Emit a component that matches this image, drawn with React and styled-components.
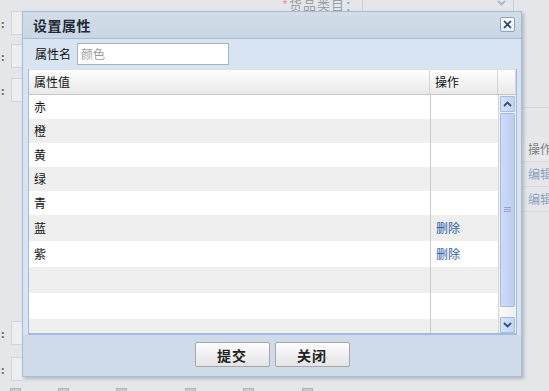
import React from 'react';
import styled, { createGlobalStyle } from 'styled-components';

const GlobalStyle = createGlobalStyle`
  html, body {
    margin: 0;
    padding: 0;
    background: #e4e6e9;
  }
  * { box-sizing: border-box; }
`;

const font = `"Noto Sans CJK SC", "DejaVu Sans", sans-serif`;

//====== Background page ======//
const Page = styled.div`
  position: relative;
  width: 549px;
  height: 391px;
  overflow: hidden;
  background: #e4e6e9;
  font-family: ${font};
  font-size: 12px;
  color: #333;
`;

const Backdrop = styled.div`
  display: flex;
  flex-direction: column;
  height: 100%;
`;

const TopStrip = styled.div`
  display: flex;
  align-items: flex-start;
  height: 12px;
  padding-left: 282px;
  gap: 3px;
`;

const FaintLabel = styled.span`
  font-size: 13px;
  line-height: 14px;
  margin-top: -2px;
  color: #9aa0a8;
  letter-spacing: 1px;
  em { color: #e6a0a0; font-style: normal; }
`;

const FaintSelect = styled.div`
  width: 152px;
  height: 12px;
  border-left: 1px solid #cfd3d8;
  border-right: 1px solid #cfd3d8;
  display: flex;
  justify-content: flex-end;
  align-items: flex-start;
  padding-right: 7px;
`;

const Middle = styled.div`
  flex: 1;
  display: flex;
`;

const LeftRail = styled.div`
  width: 23px;
  display: flex;
  flex-direction: column;
  padding-top: 33px;
`;

const FieldStub = styled.div`
  display: flex;
  align-items: center;
  height: 22px;
  margin-top: ${props => props.gap || 0}px;
  &::before {
    content: ':';
    width: 10px;
    padding-left: 1px;
    color: #666;
    font-size: 11px;
    font-weight: bold;
  }
  &::after {
    content: '';
    flex: 1;
    height: 100%;
    border: 1px solid #d2d5d9;
    border-right: none;
    background: #eceef0;
  }
`;

const Spacer = styled.div`
  flex: 1;
`;

const RightGrid = styled.div`
  width: 29px;
  display: flex;
  flex-direction: column;
  padding-top: 95px;
`;

const GridLine = styled.div`
  height: 1px;
  background: #d3d6da;
  margin-bottom: 29px;
`;

const BgCell = styled.div`
  height: 25px;
  line-height: 24px;
  padding-left: 8px;
  font-size: 12px;
  white-space: nowrap;
  overflow: hidden;
  color: ${props => (props.link ? '#8ea3c2' : '#7d8186')};
  background: ${props => (props.head ? '#e7e8ea' : 'transparent')};
  border-bottom: 1px solid #d9dbde;
`;

const BottomStrip = styled.div`
  height: 7px;
  display: flex;
  align-items: flex-end;
`;

const Check = styled.span`
  width: 11px;
  height: 3px;
  margin-left: ${props => props.at}px;
  background: #c6c9cd;
  border: 1px solid #b0b4b9;
  border-bottom: none;
`;

//====== Dialog ======//
const Dialog = styled.div`
  position: absolute;
  left: 22px;
  top: 11px;
  width: 500px;
  height: 366px;
  display: flex;
  flex-direction: column;
  background: #d0dce9;
  border: 1px solid #a7bcd6;
  box-shadow: 2px 2px 3px rgba(120, 130, 145, 0.45);
`;

const TitleBar = styled.div`
  height: 27px;
  display: flex;
  align-items: center;
  justify-content: space-between;
  padding: 0 6px 0 10px;
  background: linear-gradient(#d3dde8, #c9d6e4);
  border-bottom: 1px solid #a6bbd4;
`;

const Title = styled.h3`
  margin: 0;
  font-size: 14px;
  font-weight: bold;
  color: #1f2a36;
  letter-spacing: 0.5px;
`;

const CloseBtn = styled.button`
  width: 15px;
  height: 15px;
  padding: 0;
  display: flex;
  align-items: center;
  justify-content: center;
  background: linear-gradient(#ffffff, #e6eef8);
  border: 1px solid #8ba4c8;
  border-radius: 2px;
  cursor: pointer;
`;

const Body = styled.div`
  flex: 1;
  display: flex;
  flex-direction: column;
  padding: 0 4px 0 5px;
  background: #d8e4f2;
`;

const FormRow = styled.div`
  height: 30px;
  display: flex;
  align-items: center;
  gap: 6px;
  padding-left: 7px;
`;

const Label = styled.label`
  font-size: 12px;
  color: #111;
`;

const TextInput = styled.div`
  width: 152px;
  height: 22px;
  line-height: 20px;
  padding-left: 3px;
  background: #fff;
  border: 1px solid #a9b1ba;
  color: #9a9a9a;
  font-size: 12px;
`;

const Grid = styled.div`
  height: 266px;
  display: flex;
  flex-direction: column;
  background: #fff;
  border: 1px solid #9fbbe0;
  border-top: none;
  border-bottom-width: 2px;
`;

const HeadRow = styled.div`
  height: 26px;
  display: flex;
  background: linear-gradient(#ffffff, #e9e9e9);
  border-bottom: 1px solid #c7c7c7;
  border-top: 1px solid #e0e0e0;
`;

const HeadCell = styled.div`
  width: ${props => props.w}px;
  ${props => (props.grow ? 'flex: 1;' : '')}
  line-height: 24px;
  padding-left: 5px;
  font-size: 12px;
  color: #111;
  border-right: 1px solid #d4d4d4;
`;

const GridBody = styled.div`
  flex: 1;
  display: flex;
  overflow: hidden;
`;

const Rows = styled.div`
  flex: 1;
  display: flex;
  flex-direction: column;
  overflow: hidden;
`;

const Row = styled.div`
  height: ${props => props.h}px;
  flex-shrink: 0;
  display: flex;
  background: ${props => (props.odd ? '#efefef' : '#ffffff')};
`;

const Cell = styled.div`
  width: ${props => props.w}px;
  ${props => (props.grow ? 'flex: 1;' : '')}
  display: flex;
  align-items: center;
  padding-left: 5px;
  font-size: 12px;
  color: #111;
  ${props => (props.divider ? 'border-left: 1px solid #c9c9c9;' : '')}
`;

const DeleteLink = styled.a`
  color: #2b5ca8;
  text-decoration: none;
  cursor: pointer;
`;

const ScrollBar = styled.div`
  width: 18px;
  display: flex;
  flex-direction: column;
  background: #f2f2f2;
  border-left: 1px solid #d6d6d6;
  padding: 1px 1px 0 1px;
`;

const ArrowBtn = styled.div`
  height: 16px;
  display: flex;
  align-items: center;
  justify-content: center;
  background: linear-gradient(90deg, #d6e2f8, #c4d4f3);
  border: 1px solid #a6bbe0;
  border-radius: 1px;
`;

const Thumb = styled.div`
  height: 194px;
  margin-top: 1px;
  display: flex;
  align-items: center;
  justify-content: center;
  background: linear-gradient(90deg, #cedbf6, #bccdf2);
  border: 1px solid #a6bbe0;
  border-radius: 1px;
`;

const Track = styled.div`
  flex: 1;
  background: linear-gradient(90deg, #fafafa, #eeeeee);
`;

const Footer = styled.div`
  height: 42px;
  display: flex;
  justify-content: center;
  align-items: center;
  gap: 5px;
  padding-bottom: 1px;
  background: #cfdbe8;
`;

const Button = styled.button`
  width: 75px;
  height: 25px;
  padding: 0;
  font-family: ${font};
  font-size: 14px;
  font-weight: bold;
  color: #222;
  background: linear-gradient(#fdfdfd, #e4e4e4);
  border: 1px solid #a4a7ab;
  border-radius: 2px;
  letter-spacing: 1px;
  cursor: pointer;
`;

const Chevron = ({ up, color = '#2f4d86' }) => (
  <svg width="9" height="6" viewBox="0 0 9 6">
    <path
      d={up ? 'M1 5 L4.5 1.5 L8 5' : 'M1 1 L4.5 4.5 L8 1'}
      fill="none"
      stroke={color}
      strokeWidth="1.8"
    />
  </svg>
);

const Grip = () => (
  <svg width="7" height="6" viewBox="0 0 7 6">
    <path d="M0 0.5H7M0 2.5H7M0 4.5H7" stroke="#8ea6d6" strokeWidth="1" />
  </svg>
);

const values = [
  { name: '赤', h: 24 },
  { name: '橙', h: 24 },
  { name: '黄', h: 24 },
  { name: '绿', h: 24 },
  { name: '青', h: 24 },
  { name: '蓝', h: 26, del: true },
  { name: '紫', h: 26, del: true },
  { name: '', h: 26 },
  { name: '', h: 26 },
  { name: '', h: 26 },
];

export default function App() {
  return (
    <Page>
      <GlobalStyle />
      <Backdrop>
        <TopStrip>
          <FaintLabel><em>*</em>货品类目：</FaintLabel>
          <FaintSelect><Chevron color="#aab6cc" /></FaintSelect>
        </TopStrip>
        <Middle>
          <LeftRail>
            <FieldStub gap={-33} />
            <FieldStub gap={11} />
            <FieldStub gap={12} />
            <Spacer />
            <FieldStub />
            <FieldStub gap={14} />
            <div style={{ height: 4 }} />
          </LeftRail>
          <Spacer />
          <RightGrid>
            <GridLine />
            <BgCell head>操作</BgCell>
            <BgCell link>编辑</BgCell>
            <BgCell link>编辑</BgCell>
          </RightGrid>
        </Middle>
        <BottomStrip>
          <Check at={10} />
          <Check at={37} />
          <Check at={47} />
          <Check at={58} />
          <Check at={47} />
          <Check at={48} />
        </BottomStrip>
      </Backdrop>

      <Dialog>
        <TitleBar>
          <Title>设置属性</Title>
          <CloseBtn aria-label="close">
            <svg width="9" height="9" viewBox="0 0 9 9">
              <path d="M1 1 L8 8 M8 1 L1 8" stroke="#1e3f78" strokeWidth="1.6" />
            </svg>
          </CloseBtn>
        </TitleBar>
        <Body>
          <FormRow>
            <Label>属性名</Label>
            <TextInput>颜色</TextInput>
          </FormRow>
          <Grid>
            <HeadRow>
              <HeadCell grow>属性值</HeadCell>
              <HeadCell w={68}>操作</HeadCell>
              <HeadCell w={18} />
            </HeadRow>
            <GridBody>
              <Rows>
                {values.map((v, i) => (
                  <Row key={i} h={v.h} odd={i % 2 === 1}>
                    <Cell grow>{v.name}</Cell>
                    <Cell w={68} divider>
                      {v.del && <DeleteLink>删除</DeleteLink>}
                    </Cell>
                  </Row>
                ))}
              </Rows>
              <ScrollBar>
                <ArrowBtn><Chevron up /></ArrowBtn>
                <Thumb><Grip /></Thumb>
                <Track />
                <ArrowBtn><Chevron /></ArrowBtn>
              </ScrollBar>
            </GridBody>
          </Grid>
        </Body>
        <Footer>
          <Button>提交</Button>
          <Button>关闭</Button>
        </Footer>
      </Dialog>
    </Page>
  );
}
